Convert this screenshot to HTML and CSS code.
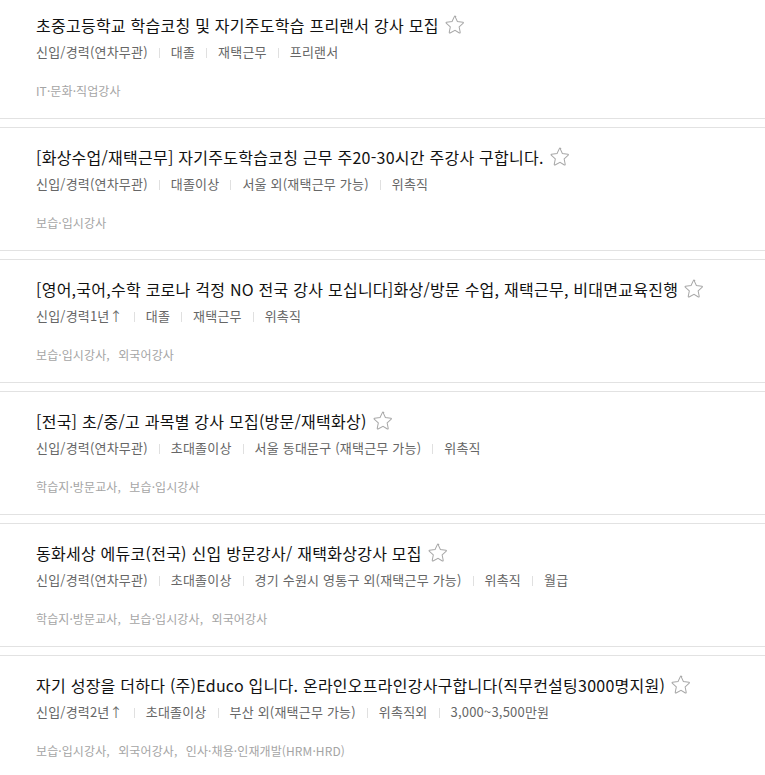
FILE: index.html
```html
<!DOCTYPE html>
<html lang="ko">
<head>
    <meta charset="UTF-8">
    <meta name="viewport" content="width=device-width, initial-scale=1.0">
    <title>채용정보 목록</title>
    <link rel="stylesheet" href="styles.css">
</head>
<body>

<ul class="job-list">
    <li class="job-item">
        <div class="job-title">
            <a href="#">초중고등학교 학습코칭 및 자기주도학습 프리랜서 강사 모집</a>
            <button class="scrap" title="스크랩"><svg viewBox="0 0 24 24"><path d="M12 2.6l2.6 5.6 6.1.7c.5.1.7.7.3 1l-4.5 4.2 1.2 6c.1.5-.4.9-.9.6L12 17.8l-5.4 2.9c-.5.3-1-.1-.9-.6l1.2-6-4.5-4.2c-.4-.3-.2-.9.3-1l6.1-.7L11.4 2.6c.2-.5.9-.5 1.2 0z"/></svg></button>
        </div>
        <div class="job-meta">
            <span>신입/경력(연차무관)</span>
            <span>대졸</span>
            <span>재택근무</span>
            <span>프리랜서</span>
        </div>
        <div class="job-sector">
            <span>IT·문화·직업강사</span>
        </div>
    </li>

    <li class="job-item">
        <div class="job-title">
            <a href="#">[화상수업/재택근무] 자기주도학습코칭 근무 주20-30시간 주강사 구합니다.</a>
            <button class="scrap" title="스크랩"><svg viewBox="0 0 24 24"><path d="M12 2.6l2.6 5.6 6.1.7c.5.1.7.7.3 1l-4.5 4.2 1.2 6c.1.5-.4.9-.9.6L12 17.8l-5.4 2.9c-.5.3-1-.1-.9-.6l1.2-6-4.5-4.2c-.4-.3-.2-.9.3-1l6.1-.7L11.4 2.6c.2-.5.9-.5 1.2 0z"/></svg></button>
        </div>
        <div class="job-meta">
            <span>신입/경력(연차무관)</span>
            <span>대졸이상</span>
            <span>서울 외(재택근무 가능)</span>
            <span>위촉직</span>
        </div>
        <div class="job-sector">
            <span>보습·입시강사</span>
        </div>
    </li>

    <li class="job-item">
        <div class="job-title">
            <a href="#">[영어,국어,수학 코로나 걱정 NO 전국 강사 모십니다]화상/방문 수업, 재택근무, 비대면교육진행</a>
            <button class="scrap" title="스크랩"><svg viewBox="0 0 24 24"><path d="M12 2.6l2.6 5.6 6.1.7c.5.1.7.7.3 1l-4.5 4.2 1.2 6c.1.5-.4.9-.9.6L12 17.8l-5.4 2.9c-.5.3-1-.1-.9-.6l1.2-6-4.5-4.2c-.4-.3-.2-.9.3-1l6.1-.7L11.4 2.6c.2-.5.9-.5 1.2 0z"/></svg></button>
        </div>
        <div class="job-meta">
            <span>신입/경력1년↑</span>
            <span>대졸</span>
            <span>재택근무</span>
            <span>위촉직</span>
        </div>
        <div class="job-sector">
            <span>보습·입시강사,</span>
            <span>외국어강사</span>
        </div>
    </li>

    <li class="job-item">
        <div class="job-title">
            <a href="#">[전국] 초/중/고 과목별 강사 모집(방문/재택화상)</a>
            <button class="scrap" title="스크랩"><svg viewBox="0 0 24 24"><path d="M12 2.6l2.6 5.6 6.1.7c.5.1.7.7.3 1l-4.5 4.2 1.2 6c.1.5-.4.9-.9.6L12 17.8l-5.4 2.9c-.5.3-1-.1-.9-.6l1.2-6-4.5-4.2c-.4-.3-.2-.9.3-1l6.1-.7L11.4 2.6c.2-.5.9-.5 1.2 0z"/></svg></button>
        </div>
        <div class="job-meta">
            <span>신입/경력(연차무관)</span>
            <span>초대졸이상</span>
            <span>서울 동대문구 (재택근무 가능)</span>
            <span>위촉직</span>
        </div>
        <div class="job-sector">
            <span>학습지·방문교사,</span>
            <span>보습·입시강사</span>
        </div>
    </li>

    <li class="job-item">
        <div class="job-title">
            <a href="#">동화세상 에듀코(전국) 신입 방문강사/ 재택화상강사 모집</a>
            <button class="scrap" title="스크랩"><svg viewBox="0 0 24 24"><path d="M12 2.6l2.6 5.6 6.1.7c.5.1.7.7.3 1l-4.5 4.2 1.2 6c.1.5-.4.9-.9.6L12 17.8l-5.4 2.9c-.5.3-1-.1-.9-.6l1.2-6-4.5-4.2c-.4-.3-.2-.9.3-1l6.1-.7L11.4 2.6c.2-.5.9-.5 1.2 0z"/></svg></button>
        </div>
        <div class="job-meta">
            <span>신입/경력(연차무관)</span>
            <span>초대졸이상</span>
            <span>경기 수원시 영통구 외(재택근무 가능)</span>
            <span>위촉직</span>
            <span>월급</span>
        </div>
        <div class="job-sector">
            <span>학습지·방문교사,</span>
            <span>보습·입시강사,</span>
            <span>외국어강사</span>
        </div>
    </li>

    <li class="job-item">
        <div class="job-title">
            <a href="#">자기 성장을 더하다 (주)Educo 입니다. 온라인오프라인강사구합니다(직무컨설팅3000명지원)</a>
            <button class="scrap" title="스크랩"><svg viewBox="0 0 24 24"><path d="M12 2.6l2.6 5.6 6.1.7c.5.1.7.7.3 1l-4.5 4.2 1.2 6c.1.5-.4.9-.9.6L12 17.8l-5.4 2.9c-.5.3-1-.1-.9-.6l1.2-6-4.5-4.2c-.4-.3-.2-.9.3-1l6.1-.7L11.4 2.6c.2-.5.9-.5 1.2 0z"/></svg></button>
        </div>
        <div class="job-meta">
            <span>신입/경력2년↑</span>
            <span>초대졸이상</span>
            <span>부산 외(재택근무 가능)</span>
            <span>위촉직외</span>
            <span>3,000~3,500만원</span>
        </div>
        <div class="job-sector">
            <span>보습·입시강사,</span>
            <span>외국어강사,</span>
            <span>인사·채용·인재개발(HRM·HRD)</span>
        </div>
    </li>
</ul>

</body>
</html>
```

FILE: styles.css
```css
body {
    margin: 0;
    background-color: #fff;
    font-family: "Noto Sans CJK KR", "Noto Sans", sans-serif;
}
.job-list {
    list-style: none;
    margin: -5px 0 0;
    padding: 0;
}
.job-item {
    border-top: 1px solid #e2e2e2;
    border-bottom: 1px solid #e2e2e2;
    margin-bottom: 8px;
    padding: 17px 36px 17px;
}
.job-title {
    display: flex;
    align-items: center;
    height: 24px;
}
.job-title a {
    color: #111;
    text-decoration: none;
    font-size: 16px;
    letter-spacing: 0.25px;
    white-space: nowrap;
}
.scrap {
    border: none;
    background: none;
    padding: 0;
    margin-left: 5px;
    width: 22px;
    height: 22px;
    cursor: pointer;
}
.scrap svg {
    width: 22px;
    height: 22px;
    fill: none;
    stroke: #a8a8a8;
    stroke-width: 1.1;
}
.job-meta {
    display: flex;
    align-items: center;
    margin-top: 4px;
    height: 20px;
    font-size: 13px;
    letter-spacing: 0.2px;
    color: #666;
}
.job-meta span + span::before {
    content: "";
    display: inline-block;
    width: 1px;
    height: 10px;
    margin: 0 11px 0 11px;
    background-color: #e0e0e0;
    vertical-align: -1px;
}
.job-sector {
    margin-top: 20px;
    height: 20px;
    line-height: 20px;
    font-size: 12px;
    letter-spacing: 0.1px;
    color: #a5a5a5;
}
.job-sector span {
    margin-right: 5px;
}
```
